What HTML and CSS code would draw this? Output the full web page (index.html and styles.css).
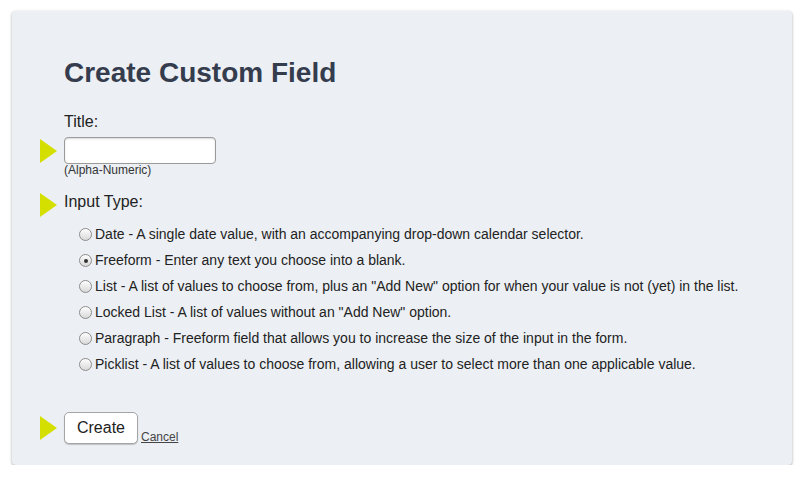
FILE: index.html
```html
<!DOCTYPE html>
<html>
<head>
<meta charset="utf-8">
<link rel="stylesheet" href="styles.css">
</head>
<body>
<div class="panel">
  <h1 class="title">Create Custom Field</h1>

  <div class="row row-title">
    <div class="marker-col"></div>
    <div class="content">
      <div class="label">Title:</div>
    </div>
  </div>
  <div class="row">
    <div class="marker-col"><span class="arrow arrow-input"></span></div>
    <div class="content">
      <input class="text-input" type="text">
      <div class="hint">(Alpha-Numeric)</div>
    </div>
  </div>

  <div class="row row-type">
    <div class="marker-col"><span class="arrow arrow-type"></span></div>
    <div class="content">
      <div class="label">Input Type:</div>
      <ul class="options">
        <li class="option"><span class="radio"></span>Date - A single date value, with an accompanying drop-down calendar selector.</li>
        <li class="option"><span class="radio checked"></span>Freeform - Enter any text you choose into a blank.</li>
        <li class="option"><span class="radio"></span>List - A list of values to choose from, plus an "Add New" option for when your value is not (yet) in the list.</li>
        <li class="option"><span class="radio"></span>Locked List - A list of values without an "Add New" option.</li>
        <li class="option"><span class="radio"></span>Paragraph - Freeform field that allows you to increase the size of the input in the form.</li>
        <li class="option"><span class="radio"></span>Picklist - A list of values to choose from, allowing a user to select more than one applicable value.</li>
      </ul>
    </div>
  </div>

  <div class="row row-actions">
    <div class="marker-col"><span class="arrow arrow-button"></span></div>
    <div class="content actions">
      <button class="btn" type="button">Create</button><a class="cancel" href="#">Cancel</a>
    </div>
  </div>
</div>
</body>
</html>
```

FILE: styles.css
```css
* { box-sizing: border-box; }

html, body {
  margin: 0;
  padding: 0;
  background: #ffffff;
  font-family: "Liberation Sans", Arial, Helvetica, sans-serif;
  color: #222222;
}

.panel {
  margin: 11px 12px 0 12px;
  width: 780px;
  height: 454px;
  background: #ecf0f4;
  border-radius: 4px;
  box-shadow: 0 1px 3px rgba(0, 0, 0, 0.35);
  padding: 46px 0 0 28px;
}

.title {
  margin: 0 0 0 24px;
  font-size: 28px;
  line-height: 32px;
  font-weight: bold;
  color: #343c4d;
}

.row {
  display: flex;
}

.marker-col {
  width: 24px;
  flex: none;
  position: relative;
}

.arrow {
  display: block;
  width: 0;
  height: 0;
  border-top: 12.5px solid transparent;
  border-bottom: 12.5px solid transparent;
  border-left: 17px solid #d4df00;
}

.arrow-input { margin-top: 8px; }
.arrow-type { margin-top: 1px; }
.arrow-button { margin-top: 4px; }

.content {
  flex: 1;
}

.row-title {
  margin-top: 23px;
}

.label {
  font-size: 16px;
  line-height: 19px;
}

.text-input {
  display: block;
  margin: 6px 0 0 0;
  width: 152px;
  height: 27px;
  border: 1px solid #9a9a9a;
  border-radius: 4px;
  background: #ffffff;
  box-shadow: inset 0 1px 2px rgba(0, 0, 0, 0.15);
  padding: 2px 4px;
  font-size: 14px;
  font-family: inherit;
}

.hint {
  font-size: 12px;
  line-height: 13px;
  color: #333333;
}

.row-type {
  margin-top: 15px;
}

.options {
  list-style: none;
  margin: 10px 0 0 0;
  padding: 0 0 0 15px;
}

.option {
  display: flex;
  align-items: center;
  font-size: 14px;
  line-height: 26px;
  height: 26px;
  white-space: nowrap;
}

.radio {
  display: inline-block;
  width: 13px;
  height: 13px;
  margin: 1px 3px 0 0;
  border-radius: 50%;
  border: 1px solid #8c8c8c;
  background: linear-gradient(#fdfdfd, #d9d9d9);
  box-shadow: inset 0 1px 1px rgba(255, 255, 255, 0.8);
  position: relative;
  flex: none;
}

.radio.checked::after {
  content: "";
  position: absolute;
  left: 3.5px;
  top: 3.5px;
  width: 4px;
  height: 4px;
  border-radius: 50%;
  background: #333333;
}

.row-actions {
  margin-top: 35px;
}

.actions {
  display: flex;
  align-items: flex-end;
}

.btn {
  width: 74px;
  height: 32px;
  padding: 0;
  background: #ffffff;
  border: 1px solid #a5a5a5;
  border-radius: 5px;
  box-shadow: 0 1px 1px rgba(0, 0, 0, 0.2);
  font-family: inherit;
  font-size: 16px;
  color: #222222;
}

.cancel {
  margin-left: 3px;
  margin-bottom: 0;
  font-size: 12px;
  line-height: 14px;
  color: #444444;
  text-decoration: underline;
}
```
